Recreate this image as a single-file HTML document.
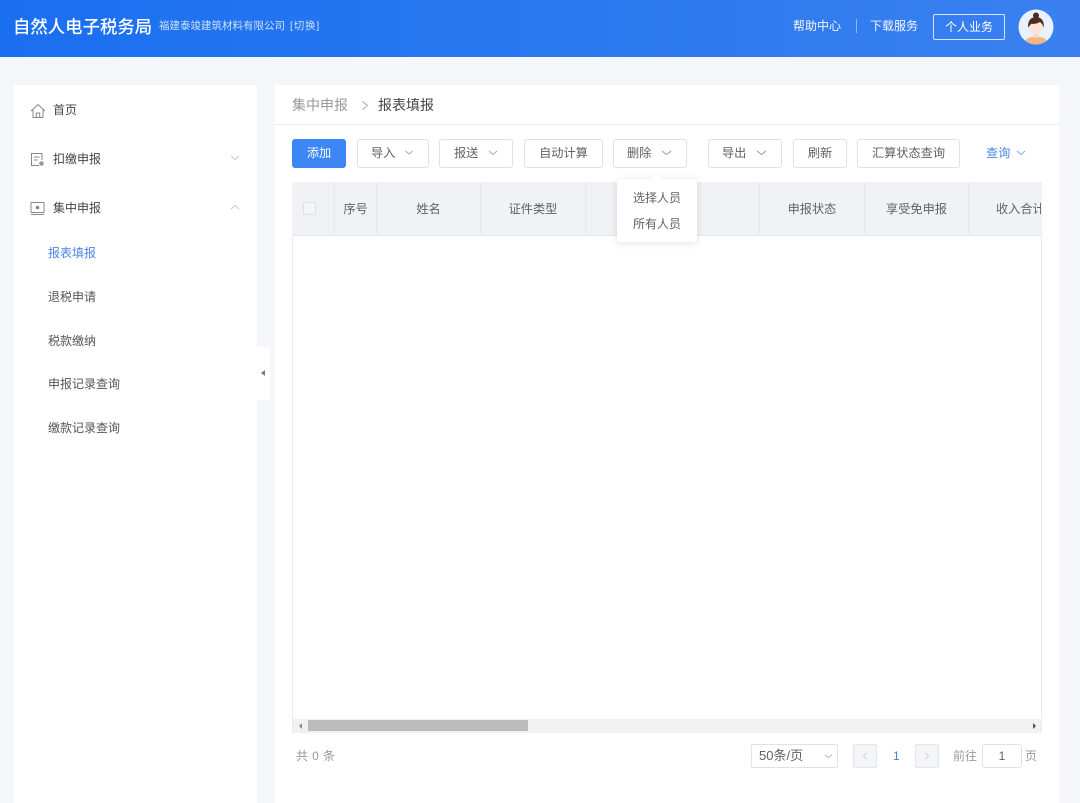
<!DOCTYPE html>
<html lang="zh"><head><meta charset="utf-8"><title>自然人电子税务局</title>
<style>
html,body{margin:0;padding:0}
body{width:1080px;height:803px;position:relative;overflow:hidden;background:#f4f6fa;font-family:"Liberation Sans","Noto Sans CJK SC",sans-serif;color:#555;font-size:12px}
.a{position:absolute;box-sizing:border-box}
.t{position:absolute;white-space:nowrap;line-height:20px;height:20px}
.b{position:absolute;box-sizing:border-box;top:139px;height:29px;border:1px solid #dfe2e8;border-radius:3px;background:#fff;line-height:26px;color:#606266;font-size:12.2px;white-space:nowrap}
.c{position:absolute;overflow:visible}
.th{position:absolute;top:199px;text-align:center;line-height:20px;color:#606266;font-size:12.2px;white-space:nowrap}
.v{position:absolute;top:183px;width:1px;height:53px;background:#e4e7ec}
</style></head><body>
<div class="a" style="left:0;top:0;width:1080px;height:57px;background:linear-gradient(90deg,#1a6ff0,#3a80f0)"></div>
<div class="t" style="left:13px;top:16px;font-size:17.4px;font-weight:500;line-height:22px;height:22px;color:#fff">自然人电子税务局</div>
<div class="t" style="left:159px;top:16px;font-size:10.5px;color:#cfe0fb">福建泰竣建筑材料有限公司</div>
<div class="t" style="left:290px;top:16px;font-size:10.5px;letter-spacing:.8px;color:#cfe0fb">[切换]</div>
<div class="t" style="left:793px;top:16px;color:#f2f6ff">帮助中心</div>
<div class="a" style="left:856px;top:19px;width:1px;height:14px;background:#8db8f6"></div>
<div class="t" style="left:870px;top:16px;color:#f2f6ff">下载服务</div>
<div class="a" style="left:933px;top:14px;width:72px;height:26px;border:1px solid #d5e4fc;border-radius:2px;color:#fff;text-align:center;line-height:25px">个人业务</div>
<svg class="c" style="left:1018px;top:9px" width="36" height="36" viewBox="0 0 36 36">
<defs><clipPath id="av"><circle cx="18" cy="18" r="17.5"/></clipPath></defs>
<circle cx="18" cy="18" r="17.5" fill="#e9f2fc"/>
<g clip-path="url(#av)">
<path d="M5 36c1-6 7-8.500 13-8.500S30 30 31 36z" fill="#f8b47e"/>
<rect x="15.500" y="21" width="5" height="7.500" fill="#f8d8c6"/>
<ellipse cx="18" cy="17.500" rx="6.300" ry="8" fill="#fbe3d6"/>
<path d="M10.500 19C9 12 13 8 18 8s9 4 7.500 11c-.5-3-2-5-3.700-6-2 1.500-6.300 2.300-8.300 1.700-1.500 1-2.500 2.500-3 4.300z" fill="#4a2c20"/>
<circle cx="18" cy="6.500" r="3" fill="#4a2c20"/>
</g></svg>

<!-- sidebar -->
<div class="a" style="left:14px;top:85px;width:243px;height:718px;background:#fff"></div>
<svg class="c" style="left:30px;top:103px" width="16" height="16" viewBox="0 0 16 16" fill="none" stroke="#888" stroke-width="1"><path d="M1 8 8 1.500 15 8M3 6.500V14.500H13V6.500M6.300 14.500V10H9.700V14.500"/></svg>
<div class="t" style="left:53px;top:100px;color:#444">首页</div>
<svg class="c" style="left:30px;top:152px" width="15" height="15" viewBox="0 0 15 15" fill="none" stroke="#888" stroke-width="1"><path d="M9 13.500H1.500V1.500H12V8M4 5H9.500M4 8H7.500"/><circle cx="11.500" cy="11.500" r="2.300" fill="#999" stroke="none"/></svg>
<div class="t" style="left:53px;top:149px;color:#444">扣缴申报</div>
<svg class="c" style="left:230px;top:155px" width="10" height="6" viewBox="0 0 10 6" fill="none" stroke="#c4c7cc"><path d="M1 1l4 3.500L9 1"/></svg>
<svg class="c" style="left:30px;top:201px" width="15" height="15" viewBox="0 0 15 15" fill="none" stroke="#888" stroke-width="1"><rect x="1" y="1.500" width="13" height="10"/><path d="M1 13.500H14"/><circle cx="7.500" cy="6.500" r="1.800" fill="#888" stroke="none"/></svg>
<div class="t" style="left:53px;top:198px;color:#444">集中申报</div>
<svg class="c" style="left:230px;top:204px" width="10" height="6" viewBox="0 0 10 6" fill="none" stroke="#c4c7cc"><path d="M1 5l4-3.500L9 5"/></svg>
<div class="t" style="left:48px;top:243px;color:#4a86e8">报表填报</div>
<div class="t" style="left:48px;top:287px">退税申请</div>
<div class="t" style="left:48px;top:331px">税款缴纳</div>
<div class="t" style="left:48px;top:374px">申报记录查询</div>
<div class="t" style="left:48px;top:418px">缴款记录查询</div>
<div class="a" style="left:257px;top:347px;width:13px;height:53px;background:#fff;border-radius:0 3px 3px 0"></div>
<div class="a" style="left:261px;top:370px;width:0;height:0;border:3.500px solid transparent;border-right:4px solid #777;border-left:0"></div>

<!-- main -->
<div class="a" style="left:275px;top:85px;width:784px;height:718px;background:#fff"></div>
<div class="a" style="left:275px;top:124px;width:784px;height:1px;background:#e6e8ec"></div>
<div class="t" style="left:292px;top:95px;font-size:14px;color:#999">集中申报</div>
<svg class="c" style="left:361px;top:101px" width="8" height="9" viewBox="0 0 8 9" fill="none" stroke="#aaa"><path d="M1.500 .5l5 4-5 4"/></svg>
<div class="t" style="left:378px;top:95px;font-size:14px;color:#444">报表填报</div>

<!-- buttons -->
<div class="b" style="left:292px;width:54px;background:#3d86f5;border-color:#3d86f5;color:#fff;text-align:center">添加</div>
<div class="b" style="left:357px;width:72px;padding-left:13px">导入</div>
<svg class="c" style="left:404px;top:150px" width="10" height="6" viewBox="0 0 10 6" fill="none" stroke="#aaa"><path d="M1.500 1l3.500 3 3.500-3"/></svg>
<div class="b" style="left:439px;width:74px;padding-left:14px">报送</div>
<svg class="c" style="left:488px;top:150px" width="10" height="6" viewBox="0 0 10 6" fill="none" stroke="#aaa"><path d="M1 1l4 3.500L9 1"/></svg>
<div class="b" style="left:524px;width:79px;text-align:center">自动计算</div>
<div class="b" style="left:613px;width:74px;padding-left:13px">删除</div>
<svg class="c" style="left:661px;top:150px" width="11" height="6" viewBox="0 0 11 6" fill="none" stroke="#999"><path d="M1 1l4.500 3.500L10 1"/></svg>
<div class="b" style="left:708px;width:74px;padding-left:13px">导出</div>
<svg class="c" style="left:756px;top:150px" width="11" height="6" viewBox="0 0 11 6" fill="none" stroke="#999"><path d="M1 1l4.500 3.500L10 1"/></svg>
<div class="b" style="left:793px;width:54px;text-align:center">刷新</div>
<div class="b" style="left:857px;width:103px;text-align:center">汇算状态查询</div>
<div class="t" style="left:986px;top:143px;color:#4a86e8;font-size:12.2px">查询</div>
<svg class="c" style="left:1016px;top:150px" width="10" height="6" viewBox="0 0 10 6" fill="none" stroke="#7aa6ee"><path d="M1 1l4 3.500L9 1"/></svg>

<!-- table -->
<div class="a" style="left:292px;top:182px;width:750px;height:551px;border:1px solid #e8eaee;border-width:0 1px;background:#fff"></div>
<div class="a" style="left:292px;top:182px;width:750px;height:54px;background:#f0f2f5;border-bottom:1px solid #e6e8ec"></div>
<div class="a" style="left:303px;top:202px;width:13px;height:13px;border:1px solid #dcdfe6;border-radius:2px;background:#f4f5f7"></div>
<div class="v" style="left:334px"></div><div class="v" style="left:376px"></div><div class="v" style="left:480px"></div><div class="v" style="left:585px"></div><div class="v" style="left:759px"></div><div class="v" style="left:864px"></div><div class="v" style="left:968px"></div>
<div class="th" style="left:335px;width:41px;">序号</div>
<div class="th" style="left:377px;width:103px">姓名</div>
<div class="th" style="left:481px;width:104px">证件类型</div>
<div class="th" style="left:760px;width:104px">申报状态</div>
<div class="th" style="left:865px;width:103px">享受免申报</div>
<div class="a" style="left:969px;top:183px;width:72px;height:52px;overflow:hidden"><div class="t" style="left:27px;top:16px;font-size:12.2px;color:#606266">收入合计</div></div>

<!-- scrollbar -->
<div class="a" style="left:293px;top:719px;width:748px;height:14px;background:#f1f1f1"></div>
<div class="a" style="left:308px;top:720px;width:220px;height:11px;background:#bcbcbc"></div>
<div class="a" style="left:299px;top:723px;width:0;height:0;border:3px solid transparent;border-right:3px solid #888;border-left:0"></div>
<div class="a" style="left:1033px;top:723px;width:0;height:0;border:3px solid transparent;border-left:3px solid #555;border-right:0"></div>

<!-- dropdown -->
<div class="a" style="left:617px;top:179px;width:80px;height:63px;background:#fff;border-radius:3px;box-shadow:0 1px 8px rgba(0,0,0,.12)"></div>
<div class="a" style="left:653px;top:176px;width:7px;height:7px;background:#fff;transform:rotate(45deg)"></div>
<div class="t" style="left:633px;top:188px;color:#606266">选择人员</div>
<div class="t" style="left:633px;top:214px;color:#606266">所有人员</div>

<!-- pagination -->
<div class="t" style="left:296px;top:746px;color:#999;letter-spacing:.4px">共 0 条</div>
<div class="a" style="left:751px;top:744px;width:87px;height:24px;border:1px solid #dfe2e8;border-radius:2px;padding-left:7px;line-height:22px;color:#606266;font-size:13px">50条/页</div>
<svg class="c" style="left:824px;top:754px" width="9" height="5" viewBox="0 0 9 5" fill="none" stroke="#bbb"><path d="M1 .7l3.500 3 3.500-3"/></svg>
<div class="a" style="left:853px;top:744px;width:24px;height:24px;background:#f4f5f7;border:1px solid #e2e5ea;border-radius:2px"></div>
<svg class="c" style="left:862px;top:752px" width="6" height="8" viewBox="0 0 6 8" fill="none" stroke="#d0d3d8"><path d="M4.500 1 1.500 4l3 3"/></svg>
<div class="t" style="left:893px;top:746px;color:#4a7fc8">1</div>
<div class="a" style="left:915px;top:744px;width:24px;height:24px;background:#f4f5f7;border:1px solid #e2e5ea;border-radius:2px"></div>
<svg class="c" style="left:924px;top:752px" width="6" height="8" viewBox="0 0 6 8" fill="none" stroke="#d0d3d8"><path d="M1.500 1l3 3-3 3"/></svg>
<div class="t" style="left:953px;top:746px;color:#999">前往</div>
<div class="a" style="left:982px;top:744px;width:40px;height:24px;border:1px solid #dfe2e8;border-radius:3px;text-align:center;line-height:22px;color:#606266">1</div>
<div class="t" style="left:1025px;top:746px;color:#999">页</div>
</body></html>
